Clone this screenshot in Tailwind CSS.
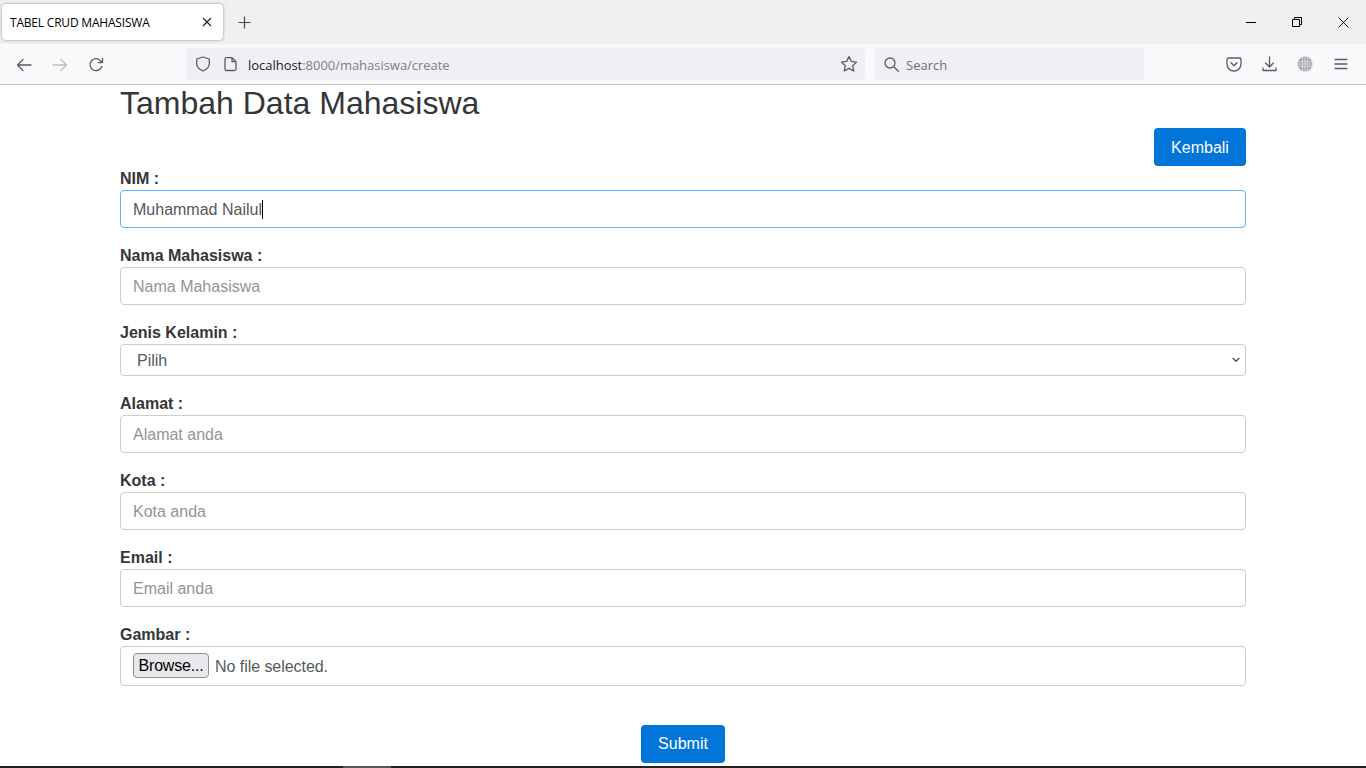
<!DOCTYPE html>
<html lang="en">
  <head>
    <meta charset="UTF-8" />
    <title>TABEL CRUD MAHASISWA</title>
    <script src="https://cdn.jsdelivr.net/npm/@tailwindcss/browser@4"></script>
  </head>

  <body class="h-[768px] overflow-hidden bg-white flex flex-col font-['Liberation_Sans',Arial,sans-serif] text-[#343638]">
    <!-- Tab strip -->
    <div class="h-[44px] shrink-0 bg-[#f0f0f0] flex items-start font-['Open_Sans',sans-serif]">
      <div class="ml-[2px] mt-[4px] w-[221px] h-[36px] bg-white rounded-[4px] shadow-[0_0_3px_rgba(0,0,0,0.4)] flex items-center justify-between pl-[8px] pr-[11px]">
        <span class="mt-[2px] text-[12px] tracking-[-0.2px] text-black">TABEL CRUD MAHASISWA</span>
        <svg class="w-[10px] h-[10px]" viewBox="0 0 10 10" fill="none" stroke="#222" stroke-width="1.2"><path d="M1 1l8 8M9 1l-8 8" /></svg>
      </div>
      <svg class="ml-[15px] mt-[16px] w-[13px] h-[13px]" viewBox="0 0 13 13" fill="none" stroke="#444" stroke-width="1.2"><path d="M6.5 0.5v12M0.5 6.5h12" /></svg>
      <div class="ml-auto flex">
        <div class="w-[46px] h-[44px] flex items-center justify-center"><svg class="w-[10px] h-[10px]" viewBox="0 0 10 10" stroke="#000"><path d="M0 5.5h10" /></svg></div>
        <div class="w-[46px] h-[44px] flex items-center justify-center"><svg class="w-[10px] h-[10px]" viewBox="0 0 10 10" fill="none" stroke="#000"><path d="M0.5 2.5h7v7h-7zM2.5 2.5v-2h7v7h-2" /></svg></div>
        <div class="w-[46px] h-[44px] flex items-center justify-center"><svg class="w-[11px] h-[11px]" viewBox="0 0 11 11" fill="none" stroke="#000" stroke-width="0.9"><path d="M0.5 0.5l10 10M10.5 0.5l-10 10" /></svg></div>
      </div>
    </div>

    <!-- Nav bar -->
    <div class="h-[41px] shrink-0 bg-[#f9f9fb] border-b border-[#c8c8ca] flex items-center font-['Open_Sans',sans-serif]">
      <svg class="ml-[16px] mt-[2px] w-[16px] h-[16px]" viewBox="0 0 16 16" fill="none" stroke="#5b5b66" stroke-width="1.3" stroke-linecap="round" stroke-linejoin="round"><path d="M15 8H1.5M7 2.5L1.5 8 7 13.5" /></svg>
      <svg class="ml-[20px] mt-[2px] w-[16px] h-[16px]" viewBox="0 0 16 16" fill="none" stroke="#bdbdc2" stroke-width="1.3" stroke-linecap="round" stroke-linejoin="round"><path d="M1 8h13.5M9 2.5L14.5 8 9 13.5" /></svg>
      <svg class="ml-[20px] mt-[2px] w-[16px] h-[16px]" viewBox="0 0 16 16" fill="none" stroke="#5b5b66" stroke-width="1.3" stroke-linecap="round" stroke-linejoin="round"><path d="M13.8 9.5A6 6 0 1 1 12.5 3.6L14.5 5.5M14.5 1.5v4h-4" /></svg>
      <div class="ml-[82px] w-[679px] h-[32px] bg-[#f0f0f4] rounded-[4px] flex items-center">
        <svg class="ml-[9px] w-[16px] h-[16px]" viewBox="0 0 16 16" fill="none" stroke="#5b5b66" stroke-width="1.3" stroke-linejoin="round"><path d="M8 1l6.3 2v4.5c0 3.6-2.7 6-6.3 7.5-3.6-1.500-6.300-3.900-6.300-7.500V3z" /></svg>
        <svg class="ml-[13px] w-[14px] h-[16px]" viewBox="0 0 14 16" fill="none" stroke="#5b5b66" stroke-width="1.3" stroke-linejoin="round"><path d="M2.500 1.700h5.500l4 4v7.300a1.500 1.500 0 0 1-1.500 1.500h-8a1.500 1.500 0 0 1-1.500-1.500V3.200a1.500 1.500 0 0 1 1.500-1.500zM8 1.700v4h4" /></svg>
        <span class="ml-[10px] mt-[4px] text-[13px] tracking-[-0.03px] text-[#1c1b22]">localhost<span class="text-[#7f7f86]">:8000/mahasiswa/create</span></span>
        <svg class="ml-auto mr-[7px] w-[18px] h-[18px]" viewBox="0 0 18 18" fill="none" stroke="#5b5b66" stroke-width="1.3" stroke-linejoin="round"><path d="M9 1.500l2.300 4.900 5.200 0.700-3.800 3.600 1 5.300L9 13.400 4.300 16l1-5.300-3.800-3.600 5.200-0.700z" /></svg>
      </div>
      <div class="ml-[10px] w-[269px] h-[32px] bg-[#f0f0f4] rounded-[4px] flex items-center">
        <svg class="ml-[9px] w-[15px] h-[15px]" viewBox="0 0 15 15" fill="none" stroke="#5b5b66" stroke-width="1.3" stroke-linecap="round"><circle cx="6" cy="6" r="5" /><path d="M9.800 9.800l4.500 4.500" /></svg>
        <span class="ml-[7px] mt-[4px] text-[13px] text-[#6f6f78]">Search</span>
      </div>
      <svg class="ml-[82px] w-[16px] h-[16px]" viewBox="0 0 16 16" fill="none" stroke="#5b5b66" stroke-width="1.300" stroke-linecap="round" stroke-linejoin="round"><path d="M2.500 2h11A1.500 1.500 0 0 1 15 3.500V8a7 7 0 0 1-14 0V3.500A1.500 1.500 0 0 1 2.500 2zM5 6.800l3 2.900 3-2.900" /></svg>
      <svg class="ml-[20px] w-[15px] h-[16px]" viewBox="0 0 15 16" fill="none" stroke="#5b5b66" stroke-width="1.300" stroke-linecap="round" stroke-linejoin="round"><path d="M7.500 1v9.500M3.500 7l4 4 4-4M1 12v2.500h13V12" /></svg>
      <svg class="ml-[20px] w-[16px] h-[16px]" viewBox="0 0 16 16" fill="#a8a8ac"><circle cx="8" cy="8" r="7.500" /><path d="M0 5.500h16M0 8h16M0 10.500h16M5.500 0v16M8 0v16M10.500 0v16" stroke="#e2e2e6" stroke-width="0.7" fill="none" /></svg>
      <svg class="ml-[21px] w-[14px] h-[12px]" viewBox="0 0 14 12" fill="none" stroke="#5b5b66" stroke-width="1.300" stroke-linecap="round"><path d="M1 1.500h12M1 6h12M1 10.500h12" /></svg>
    </div>

    <!-- Page -->
    <main class="flex-1 w-[1126px] ml-[120px]">
      <h2 class="text-[32px] leading-[36px]">Tambah Data Mahasiswa</h2>
      <div class="flex justify-end mt-[7px]">
        <a class="w-[92px] h-[38px] pt-[2px] bg-[#0275d8] rounded-[4px] text-white text-[16px] flex items-center justify-center">Kembali</a>
      </div>
      <form class="text-[16px]">
        <div class="mb-[15px]">
          <label class="block h-[24px] pt-[1px] leading-[24px] font-bold">NIM :</label>
          <div class="relative">
            <input type="text" value="Muhammad Nailul" class="block w-full h-[38px] pt-[2px] px-[12px] border border-[#5cb3fd] rounded-[4px] bg-white text-[#55595c] outline-none" />
            <span class="absolute left-[142px] top-[10px] w-px h-[19px] bg-black"></span>
          </div>
        </div>
        <div class="mb-[15px]">
          <label class="block h-[24px] pt-[1px] leading-[24px] font-bold">Nama Mahasiswa :</label>
          <input type="text" placeholder="Nama Mahasiswa" class="block w-full h-[38px] pt-[2px] px-[12px] border border-[#cccccc] rounded-[4px] bg-white outline-none placeholder:text-[#949494]" />
        </div>
        <div class="mb-[15px]">
          <label class="block h-[24px] pt-[1px] leading-[24px] font-bold">Jenis Kelamin :</label>
          <div class="relative">
            <select class="block w-full h-[32px] pt-[2px] pl-[16px] border border-[#cccccc] rounded-[4px] bg-white text-[#55595c] appearance-none outline-none"><option>Pilih</option></select>
            <svg class="absolute right-[6px] top-[13px] w-[8px] h-[6px]" viewBox="0 0 9 6" fill="none" stroke="#55595c" stroke-width="1.600"><path d="M0.700 0.700L4.500 4.500 8.300 0.700" /></svg>
          </div>
        </div>
        <div class="mb-[15px]">
          <label class="block h-[24px] pt-[1px] leading-[24px] font-bold">Alamat :</label>
          <input type="text" placeholder="Alamat anda" class="block w-full h-[38px] pt-[2px] px-[12px] border border-[#cccccc] rounded-[4px] bg-white outline-none placeholder:text-[#949494]" />
        </div>
        <div class="mb-[15px]">
          <label class="block h-[24px] pt-[1px] leading-[24px] font-bold">Kota :</label>
          <input type="text" placeholder="Kota anda" class="block w-full h-[38px] pt-[2px] px-[12px] border border-[#cccccc] rounded-[4px] bg-white outline-none placeholder:text-[#949494]" />
        </div>
        <div class="mb-[15px]">
          <label class="block h-[24px] pt-[1px] leading-[24px] font-bold">Email :</label>
          <input type="text" placeholder="Email anda" class="block w-full h-[38px] pt-[2px] px-[12px] border border-[#cccccc] rounded-[4px] bg-white outline-none placeholder:text-[#949494]" />
        </div>
        <div class="mb-[39px]">
          <label class="block h-[24px] pt-[1px] leading-[24px] font-bold">Gambar :</label>
          <div class="h-[40px] px-[12px] pt-[6px] border border-[#cccccc] rounded-[4px] bg-white flex items-start text-[#55595c]">
            <button type="button" class="w-[76px] h-[25px] pt-[1px] bg-[#e9e9ed] border border-[#8f8f9d] rounded-[4px] text-black text-[16px] tracking-[-0.2px] leading-none">Browse...</button>
            <span class="ml-[6px] mt-[2px] tracking-[-0.05px] leading-[24px]">No file selected.</span>
          </div>
        </div>
        <div class="flex justify-center">
          <button type="submit" class="w-[84px] h-[38px] bg-[#0275d8] rounded-[4px] text-white text-[16px]">Submit</button>
        </div>
      </form>
    </main>

    <!-- Strip at the very bottom of the window -->
    <div class="absolute left-0 bottom-0 w-full h-[2px] bg-[#222222]"><div class="ml-[343px] w-[48px] h-full bg-[#555555]"></div></div>
  </body>
</html>
